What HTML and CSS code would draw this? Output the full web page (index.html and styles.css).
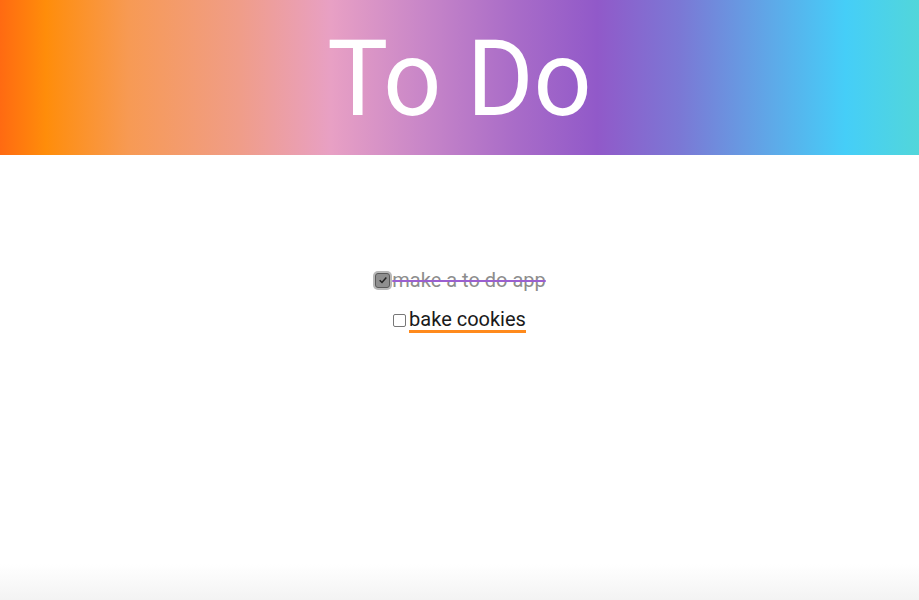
FILE: index.html
```html
<!DOCTYPE html>
<html>
<head>
<meta charset="utf-8">
<link rel="stylesheet" href="styles.css">
</head>
<body>
<header class="banner">
  <h1 class="title">To Do</h1>
</header>
<main class="list">
  <div class="item done">
    <span class="box checked"><svg viewBox="0 0 12 12" width="10" height="10"><path d="M2 6.3 L4.8 9 L10 3" fill="none" stroke="#222" stroke-width="1.8"/></svg></span>
    <span class="label">make a to do app</span>
  </div>
  <div class="item">
    <span class="box"></span>
    <span class="label active">bake cookies</span>
  </div>
</main>
<div class="fade"></div>
</body>
</html>
```
FILE: styles.css
```css
html, body { margin: 0; padding: 0; }
body {
  font-family: Roboto, "Noto Sans", sans-serif;
  background: #fff;
  height: 600px;
  overflow: hidden;
  position: relative;
}
.banner {
  height: 155px;
  background: linear-gradient(90deg, #ff6a12 0%, #ff8d0a 5%, #f79a54 14%, #f09d88 26%, #e8a0c4 36%, #c886c8 46%, #a96cc8 56%, #9159c9 65%, #7b78d5 74%, #5ea9e8 84%, #45cef8 92%, #52d6da 100%);
  display: flex;
  justify-content: center;
  align-items: center;
}
.title {
  margin: 0;
  color: #fff;
  font-weight: 400;
  font-size: 102px;
  line-height: 1;
  transform: translateY(1px) scaleY(1.04);
}
.list {
  display: flex;
  flex-direction: column;
  align-items: center;
  padding-top: 113px;
  gap: 16px;
}
.item {
  display: flex;
  align-items: center;
  height: 24px;
  font-size: 20px;
  font-weight: 400;
  color: #1a1a1a;
}
.box {
  width: 11px;
  height: 11px;
  border: 1px solid #777;
  border-radius: 2px;
  background: #fff;
  margin-right: 3px;
  display: flex;
  align-items: center;
  justify-content: center;
}
.box.checked {
  width: 13px;
  height: 13px;
  background: #8f8f8f;
  border: 1px solid #5a5a5a;
  border-radius: 3px;
  box-shadow: 0 0 0 2px #b8b8b8;
  margin: 0 2px 0 2px;
}
.done .label {
  color: #8d8d8d;
  text-decoration: line-through;
  text-decoration-color: #9b5fd0;
  text-decoration-thickness: 2px;
}
.label.active {
  border-bottom: 3px solid #ff8a1c;
  line-height: 22px;
  color: #1a1a1a;
}
.fade {
  position: absolute;
  left: 0; right: 0; bottom: 0;
  height: 36px;
  background: linear-gradient(180deg, rgba(242,242,242,0) 0%, #f3f3f3 100%);
}
```
